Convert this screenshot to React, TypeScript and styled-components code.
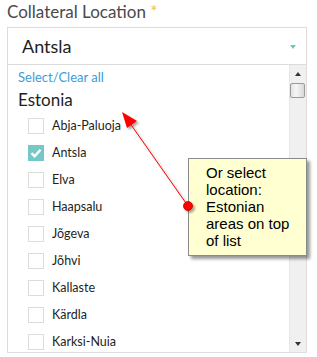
import React from "react";
import styled, { createGlobalStyle } from "styled-components";

const locations = [
  { name: "Abja-Paluoja", checked: false },
  { name: "Antsla", checked: true },
  { name: "Elva", checked: false },
  { name: "Haapsalu", checked: false },
  { name: "Jõgeva", checked: false },
  { name: "Jõhvi", checked: false },
  { name: "Kallaste", checked: false },
  { name: "Kärdla", checked: false },
  { name: "Karksi-Nuia", checked: false },
];

const App = () => {
  return (
    <StylePage>
      <GlobalStyle />
      <StyleField>
        <StyleLabel>
          Collateral Location <StyleStar>*</StyleStar>
        </StyleLabel>
        <StyleSelect>
          <StyleValue>Antsla</StyleValue>
          <StyleCaret />
        </StyleSelect>
        <StyleDropdown>
          <StyleListWrap>
            <StyleClearAll>Select/Clear all</StyleClearAll>
            <StyleGroup>Estonia</StyleGroup>
            {locations.map((item) => (
              <StyleRow key={item.name}>
                <StyleCheck $checked={item.checked}>
                  {item.checked && (
                    <svg width="12" height="10" viewBox="0 0 12 10">
                      <path
                        d="M1.5 5.2 L4.6 8.2 L10.5 1.8"
                        fill="none"
                        stroke="#fff"
                        strokeWidth="2.4"
                      />
                    </svg>
                  )}
                </StyleCheck>
                <StyleItemText>{item.name}</StyleItemText>
              </StyleRow>
            ))}
          </StyleListWrap>
          <StyleScrollbar>
            <StyleScrollBtn>
              <StyleArrowUp />
            </StyleScrollBtn>
            <StyleThumb />
            <StyleTrack />
            <StyleScrollBtn>
              <StyleArrowDown />
            </StyleScrollBtn>
          </StyleScrollbar>
        </StyleDropdown>
      </StyleField>

      <StyleNote>
        Or select location: Estonian areas on top of list
      </StyleNote>
      {/* callout arrow sits on top of the note so the dot overlaps its edge */}
      <StylePointer width="317" height="357" viewBox="0 0 317 357">
        <defs>
          <filter id="sh" x="-50%" y="-50%" width="200%" height="200%">
            <feDropShadow dx="2" dy="2" stdDeviation="1.2" floodOpacity="0.35" />
          </filter>
        </defs>
        <g filter="url(#sh)">
          <line x1="188" y1="206" x2="127" y2="119" stroke="#ff0000" strokeWidth="1" />
          <polygon points="122,112 137,121 127,128" fill="#ff0000" />
          <circle cx="188" cy="206" r="4.5" fill="#ff0000" stroke="#c00000" strokeWidth="0.8" />
        </g>
      </StylePointer>
    </StylePage>
  );
};

const GlobalStyle = createGlobalStyle`
  body {
    margin: 0;
    background: #fff;
  }
`;

const StylePage = styled.div`
  position: relative;
  width: 317px;
  height: 357px;
  overflow: hidden;
  padding: 1px 0 0 7px;
  box-sizing: border-box;
  font-family: Lato, "Open Sans", sans-serif;
`;

const StyleField = styled.div`
  width: 300px;
  display: flex;
  flex-direction: column;
`;

const StyleLabel = styled.div`
  font-size: 17px;
  line-height: 22px;
  color: #4a4a4a;
  margin-bottom: 4px;
`;

const StyleStar = styled.span`
  color: #f2c21a;
`;

const StyleSelect = styled.div`
  height: 38px;
  box-sizing: border-box;
  border: 1px solid #dcdcdc;
  display: flex;
  align-items: center;
  justify-content: space-between;
  padding: 0 10px 0 14px;
`;

const StyleValue = styled.div`
  font-size: 18px;
  color: #1e1e1e;
`;

const StyleCaret = styled.div`
  width: 0;
  height: 0;
  border-left: 3.5px solid transparent;
  border-right: 3.5px solid transparent;
  border-top: 4px solid #6cc7c7;
  margin-top: 1px;
`;

const StyleDropdown = styled.div`
  height: 288px;
  box-sizing: border-box;
  border: 1px solid #dcdcdc;
  border-top: none;
  display: flex;
`;

const StyleListWrap = styled.div`
  flex: 1;
  overflow: hidden;
  padding: 4px 0 0 10px;
`;

const StyleClearAll = styled.div`
  font-size: 13px;
  line-height: 16px;
  color: #3d9bd6;
`;

const StyleGroup = styled.div`
  font-size: 17px;
  line-height: 24px;
  color: #1e1e1e;
  margin-top: 3px;
`;

const StyleRow = styled.div`
  height: 27px;
  display: flex;
  align-items: center;
  gap: 8px;
  padding-left: 10px;
`;

const StyleCheck = styled.div<{ $checked: boolean }>`
  width: 16px;
  height: 16px;
  box-sizing: border-box;
  border: 1px solid ${(p) => (p.$checked ? "#76c8c6" : "#dcdcdc")};
  background: ${(p) => (p.$checked ? "#76c8c6" : "#fff")};
  display: flex;
  align-items: center;
  justify-content: center;
`;

const StyleItemText = styled.div`
  font-size: 12.5px;
  color: #1e1e1e;
`;

const StyleScrollbar = styled.div`
  width: 16px;
  display: flex;
  flex-direction: column;
  background: #f0f0f0;
  border-left: 1px solid #e6e6e6;
`;

const StyleScrollBtn = styled.div`
  height: 17px;
  display: flex;
  align-items: center;
  justify-content: center;
`;

const StyleArrowUp = styled.div`
  width: 0;
  height: 0;
  border-left: 3.5px solid transparent;
  border-right: 3.5px solid transparent;
  border-bottom: 4px solid #333;
`;

const StyleArrowDown = styled.div`
  width: 0;
  height: 0;
  border-left: 3.5px solid transparent;
  border-right: 3.5px solid transparent;
  border-top: 4px solid #333;
`;

const StyleThumb = styled.div`
  height: 15px;
  margin: 1px 1px 0 0;
  box-sizing: border-box;
  border: 1px solid #9c9c9c;
  border-radius: 2px;
  background: linear-gradient(90deg, #e2e2e2, #f6f6f6 40%, #d8d8d8);
`;

const StyleTrack = styled.div`
  flex: 1;
`;

const StylePointer = styled.svg`
  position: absolute;
  left: 0;
  top: 0;
  pointer-events: none;
`;

const StyleNote = styled.div`
  position: absolute;
  left: 188px;
  top: 158px;
  width: 119px;
  height: 98px;
  box-sizing: border-box;
  padding: 5px 8px 0 17px;
  background: #ffffd2;
  border: 1px solid #8a8a8a;
  box-shadow: 3px 3px 3px rgba(0, 0, 0, 0.4);
  font-family: "Liberation Sans", Arial, sans-serif;
  font-size: 15px;
  line-height: 17px;
  color: #000;
`;

export default App;
